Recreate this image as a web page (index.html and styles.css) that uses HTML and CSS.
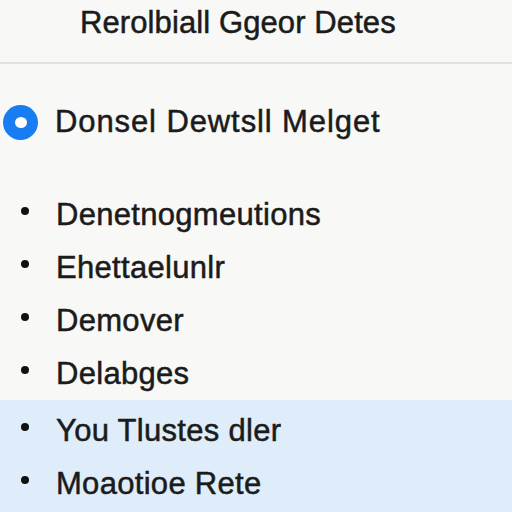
FILE: index.html
```html
<!DOCTYPE html>
<html lang="en">
<head>
  <meta charset="UTF-8">
  <meta name="viewport" content="width=device-width, initial-scale=1.0">
  <title>Rerolbiall Ggeor Detes</title>
  <link rel="stylesheet" href="styles.css">
</head>
<body>
  <header class="page-header">
    <h1 class="page-title">Rerolbiall Ggeor Detes</h1>
  </header>

  <main>
    <div class="selected-row">
      <span class="radio"><span class="radio-dot"></span></span>
      <span class="selected-label">Donsel Dewtsll Melget</span>
    </div>

    <ul class="item-list">
      <li class="item">Denetnogmeutions</li>
      <li class="item">Ehettaelunlr</li>
      <li class="item">Demover</li>
      <li class="item">Delabges</li>
    </ul>

    <ul class="item-list highlight">
      <li class="item">You Tlustes dler</li>
      <li class="item">Moaotioe Rete</li>
    </ul>
  </main>
</body>
</html>
```

FILE: styles.css
```css
* {
  box-sizing: border-box;
  margin: 0;
  padding: 0;
}

body {
  font-family: 'Liberation Sans', Arial, sans-serif;
  background-color: #f8f8f6;
  color: #1b1b1b;
  height: 512px;
  overflow: hidden;
  -webkit-text-stroke: 0.5px #1b1b1b;
}

.page-header {
  height: 64px;
  border-bottom: 2px solid #e1e1e1;
  padding-left: 80px;
  padding-top: 4px;
}

.page-title {
  font-size: 31px;
  font-weight: normal;
  line-height: 38px;
  letter-spacing: 0.1px;
}

.selected-row {
  height: 116px;
  display: flex;
  align-items: center;
  padding-left: 3px;
}

.radio {
  width: 35px;
  height: 35px;
  border-radius: 50%;
  background: #1a7cf2;
  display: flex;
  align-items: center;
  justify-content: center;
}

.radio-dot {
  width: 12px;
  height: 11px;
  border-radius: 50%;
  background: #ffffff;
}

.selected-label {
  font-size: 31px;
  letter-spacing: 0.9px;
  margin-left: 17px;
}

.item-list {
  list-style: none;
  padding-top: 8px;
}

.item-list.highlight {
  background: #deedf9;
  padding-top: 4px;
  height: 112px;
}

.item {
  height: 53px;
  display: flex;
  align-items: center;
  font-size: 31px;
  letter-spacing: 0.3px;
  padding-left: 21px;
}

.item::before {
  content: "";
  width: 8px;
  height: 8px;
  border-radius: 50%;
  background: #111;
  margin-right: 27px;
  margin-top: -8px;
}
```
